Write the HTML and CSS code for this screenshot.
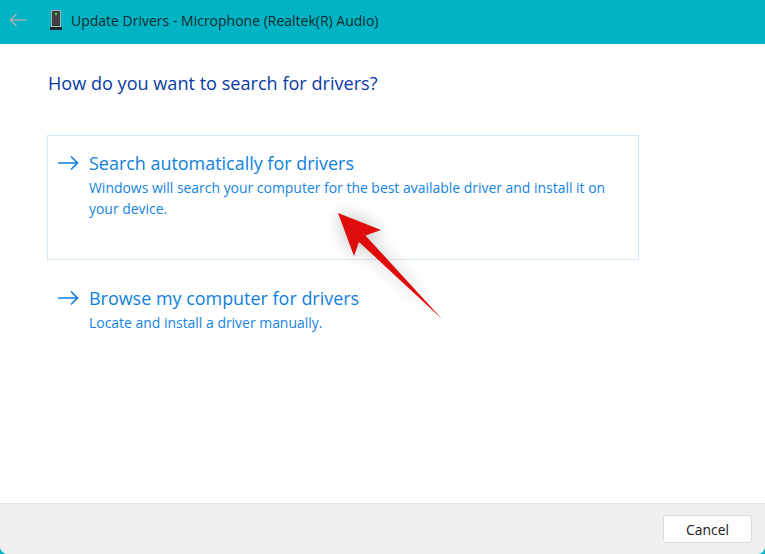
FILE: index.html
```html
<!DOCTYPE html>
<html lang="en">
<head>
<meta charset="utf-8">
<title>Update Drivers</title>
<link rel="stylesheet" href="styles.css">
</head>
<body>
<div class="window">
  <header class="titlebar">
    <svg class="back" width="18" height="14" viewBox="0 0 18 14"><path d="M17 7H2M7.500 1L1.500 7l6 6" fill="none" stroke="#a0aeb0" stroke-width="1.6"/></svg>
    <svg class="devicon" width="14" height="20" viewBox="0 0 14 20"><rect x="2" y="0" width="10" height="17" fill="#a9b4b6"/><rect x="3" y="1" width="8" height="15" fill="#3f3f3f"/><rect x="6" y="3" width="2" height="2" fill="#39e639"/><rect x="1" y="17" width="12" height="3" fill="#1d2a2c"/></svg>
    <span class="wintitle">Update Drivers - Microphone (Realtek(R) Audio)</span>
  </header>
  <main class="content">
    <h1 class="question">How do you want to search for drivers?</h1>
    <div class="option option-selected">
      <svg class="arrow" width="21" height="16" viewBox="0 0 21 16"><path d="M0 8H19.500M13 1.500L19.500 8L13 14.500" fill="none" stroke="#0f7fdc" stroke-width="1.7"/></svg>
      <div class="option-text">
        <div class="option-title">Search automatically for drivers</div>
        <div class="option-desc">Windows will search your computer for the best available driver and install it on your device.</div>
      </div>
    </div>
    <div class="option">
      <svg class="arrow" width="21" height="16" viewBox="0 0 21 16"><path d="M0 8H19.500M13 1.500L19.500 8L13 14.500" fill="none" stroke="#0f7fdc" stroke-width="1.7"/></svg>
      <div class="option-text">
        <div class="option-title">Browse my computer for drivers</div>
        <div class="option-desc">Locate and install a driver manually.</div>
      </div>
    </div>
  </main>
  <footer class="footer">
    <button class="cancel">Cancel</button>
  </footer>
  <svg class="annotation" width="140" height="160" viewBox="320 170 140 160">
    <defs><filter id="sh" x="-40%" y="-40%" width="180%" height="180%"><feGaussianBlur stdDeviation="9"/></filter></defs>
    <path d="M338 213L381 230L366 236L442 319L360 242L354 256Z" fill="#000" opacity=".28" filter="url(#sh)"/>
    <path d="M338 213L381 230L365.500 235.500L442 319L359 242L354 256Z" fill="#e00b0b"/>
  </svg>
</div>
</body>
</html>
```
FILE: styles.css
```css
html, body { margin: 0; padding: 0; }
body { width: 765px; height: 554px; overflow: hidden; background: #00b4c4; font-family: "Open Sans", "Noto Sans", sans-serif; }
.window { position: relative; width: 765px; height: 554px; display: flex; flex-direction: column; background: #fff; border-radius: 0 0 8px 8px; overflow: hidden; }
.titlebar { height: 44px; flex: none; display: flex; align-items: center; background: #00b4c4; padding: 0 0 4px 9px; box-sizing: border-box; }
.back { margin-right: 22px; }
.devicon { margin-right: 8px; }
.wintitle { font-size: 14px; color: #0f2a30; white-space: nowrap; }
.content { flex: 1; padding: 26px 0 0 47px; }
.question { margin: 0 0 39px 1px; font-size: 18.1px; font-weight: 400; line-height: 26px; color: #0a3aa5; }
.option { width: 592px; box-sizing: border-box; height: 125px; display: flex; border: 1px solid transparent; padding: 14px 0 0 10px; margin-bottom: 10px; }
.option-selected { border-color: #d5e6f3; }
.arrow { flex: none; margin: 5px 10px 0 0; }
.option-text { flex: 1; padding-right: 30px; }
.option-title { font-size: 17.95px; line-height: 26px; color: #0f7fdc; }
.option-desc { font-size: 13.95px; line-height: 20.5px; color: #1384e0; margin-top: 2px; }
.footer { height: 51px; flex: none; display: flex; justify-content: flex-end; align-items: center; background: #f0f0f0; border-top: 1px solid #e8e8e8; padding-right: 13px; box-sizing: border-box; }
.cancel { width: 89px; height: 28px; background: #fdfdfd; border: 1px solid #dcdcdc; border-radius: 3px; font: 13.9px "Open Sans", sans-serif; color: #1a1a1a; }
.annotation { position: absolute; left: 320px; top: 170px; }
```
